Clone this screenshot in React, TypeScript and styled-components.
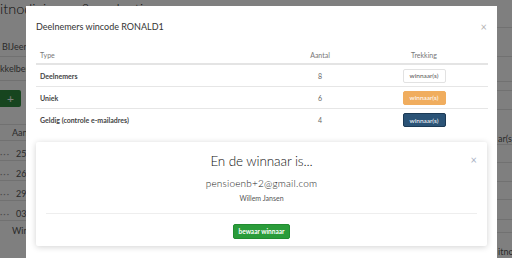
import styled, { createGlobalStyle } from 'styled-components';

const GlobalStyle = createGlobalStyle`
    html, body {
        margin: 0;
        padding: 0;
        overflow: hidden;
        background: #ffffff;
    }
    body {
        font-family: 'Lato', 'Liberation Sans', sans-serif;
        color: #333333;
    }
    * {
        box-sizing: border-box;
    }
`;

const Page = styled.div`
    position: relative;
    width: 512px;
    height: 258px;
    overflow: hidden;
    background: #ffffff;
`;

const BgTitle = styled.div`
    display: flex;
    align-items: baseline;
    gap: 4px;
    height: 36px;
    line-height: 17px;
    white-space: nowrap;
    font-weight: 300;
    font-size: 14.5px;
    color: #222;
`;

const BgSub = styled.span`
    font-size: 10px;
    color: #888;
`;

const BgColumn = styled.div`
    display: flex;
    flex-direction: column;
    width: 90px;
`;

const BgRow = styled.div<{ $h: number; $line?: boolean; $indent?: number; $end?: boolean; $drop?: number }>`
    display: flex;
    align-items: ${p => (p.$end ? 'flex-end' : 'center')};
    gap: 6px;
    height: ${p => p.$h}px;
    padding-left: ${p => p.$indent ?? 0}px;
    padding-top: ${p => p.$drop ?? 0}px;
    border-bottom: 1px solid ${p => (p.$line ? '#e2e2e2' : 'transparent')};
    font-size: 9px;
    color: #555;
    white-space: nowrap;
    overflow: hidden;
`;

const BgDots = styled.span`
    color: #999;
    letter-spacing: 1px;
`;

const BgPlus = styled.div`
    display: flex;
    align-items: center;
    justify-content: center;
    width: 21px;
    height: 17px;
    margin-top: -8px;
    background: #2e8b3e;
    border-radius: 0 2px 2px 0;
    color: #fff;
    font-size: 12px;
`;

const StripWrap = styled.div`
    position: absolute;
    left: 497px;
    top: 0;
    width: 15px;
    display: flex;
    flex-direction: column;
`;

const Backdrop = styled.div`
    position: absolute;
    inset: 0;
    background: rgba(0, 0, 0, 0.5);
`;

const Modal = styled.div`
    position: absolute;
    left: 26px;
    top: 6px;
    width: 471px;
    height: 280px;
    background: #ffffff;
    padding: 0 10px;
`;

const ModalHeader = styled.div`
    display: flex;
    align-items: center;
    justify-content: space-between;
    height: 36px;
    padding-top: 5px;
`;

const ModalTitle = styled.h4`
    margin: 0;
    font-size: 9px;
    font-weight: 400;
    color: #333;
`;

const Close = styled.span<{ $soft?: boolean }>`
    font-size: 11px;
    line-height: 1;
    color: ${p => (p.$soft ? '#a9b3c4' : '#b5b5b5')};
`;

const Table = styled.div`
    margin-top: 5px;
    width: 452px;
`;

const TRow = styled.div<{ $head?: boolean; $last?: boolean }>`
    display: grid;
    grid-template-columns: 244px 80px 128px;
    align-items: center;
    height: ${p => (p.$head ? 18 : 22)}px;
    border-bottom: ${p => (p.$head ? '2px solid #e4e4e4' : p.$last ? 'none' : '1px solid #e6e6e6')};
    font-size: 7px;
`;

const TCell = styled.div<{ $center?: boolean; $head?: boolean; $bold?: boolean }>`
    display: flex;
    justify-content: ${p => (p.$center ? 'center' : 'flex-start')};
    padding-left: ${p => (p.$center ? 0 : 4)}px;
    color: ${p => (p.$head ? '#777' : p.$bold ? '#444' : '#666')};
    font-weight: ${p => (p.$bold ? 700 : 400)};
`;

const DrawButton = styled.button<{ $variant: 'default' | 'warning' | 'primary' }>`
    width: 43px;
    height: 14px;
    padding: 0;
    font-family: 'Lato', sans-serif;
    font-size: 6.5px;
    border-radius: 2px;
    background: ${p => ({ default: '#ffffff', warning: '#f0ad5e', primary: '#2b5376' }[p.$variant])};
    color: ${p => (p.$variant === 'default' ? '#555' : '#ffffff')};
    border: 1px solid ${p => ({ default: '#e2e2e2', warning: '#f0ad5e', primary: '#1c3a55' }[p.$variant])};
`;

const WinnerCard = styled.div`
    margin-top: 11px;
    width: 451px;
    height: 104px;
    padding: 10px 10px 0 10px;
    background: #fff;
    border-radius: 2px;
    box-shadow: 0 1px 6px rgba(0, 0, 0, 0.18);
    display: flex;
    flex-direction: column;
    align-items: center;
`;

const CardHead = styled.div`
    align-self: stretch;
    display: grid;
    grid-template-columns: 1fr auto 1fr;
    align-items: start;
`;

const CardClose = styled.div`
    display: flex;
    justify-content: flex-end;
    padding-top: 2px;
`;

const WinnerTitle = styled.div`
    font-weight: 300;
    font-size: 13.5px;
    line-height: 19px;
    letter-spacing: -0.1px;
    color: #111;
`;

const Email = styled.div`
    font-weight: 300;
    font-size: 10px;
    letter-spacing: 0.2px;
    color: #222;
    margin-top: 6px;
`;

const Name = styled.div`
    font-size: 7px;
    color: #555;
    margin-top: 5px;
`;

const Divider = styled.hr`
    align-self: stretch;
    border: 0;
    border-top: 1px solid #eeeeee;
    margin: 11px 0 10px 0;
`;

const SaveButton = styled.button`
    width: 57px;
    height: 15px;
    padding: 0;
    border: 1px solid #218c30;
    border-radius: 2px;
    background: #2a9c3a;
    color: #fff;
    font-family: 'Lato', sans-serif;
    font-weight: 700;
    font-size: 6.5px;
`;

const rows = [
    { label: 'Deelnemers', count: 8, variant: 'default' as const },
    { label: 'Uniek', count: 6, variant: 'warning' as const },
    { label: 'Geldig (controle e-mailadres)', count: 4, variant: 'primary' as const },
];

const dates = ['25-1', '26-1', '29-1', '03-1'];

const strip = [28, 29, 25, 9, 19, 35, 18, 19, 18, 20, 13, 25];

function RightStrip() {
    return (
        <StripWrap>
            {strip.map((h, i) => (
                <BgRow key={i} $h={h} $line={i < strip.length - 1} $end={i === 5 || i === 11} $indent={1}>
                    {i === 5 ? 'ar(s)' : i === 11 ? 'itnod' : ''}
                </BgRow>
            ))}
        </StripWrap>
    );
}

const App = () => {
    return (
        <Page>
            <GlobalStyle />
            <BgTitle>
                <span>itnodigingen &amp; evaluaties</span>
                <BgSub>update_beoordeeling 1</BgSub>
            </BgTitle>
            <BgColumn>
                <BgRow $h={21} $line $indent={2}>BIJeenkomst</BgRow>
                <BgRow $h={24} $line>kkelberg</BgRow>
                <BgRow $h={44} $line>
                    <BgPlus>+</BgPlus>
                </BgRow>
                <BgRow $h={16} $line $indent={12}>Aanmelding</BgRow>
                {dates.map(d => (
                    <BgRow key={d} $h={20} $drop={5} $line>
                        <BgDots>···</BgDots>
                        {d}2-2019
                    </BgRow>
                ))}
                <BgRow $h={20} $indent={12}>Wincode</BgRow>
            </BgColumn>
            <RightStrip />
            <Backdrop />
            <Modal>
                <ModalHeader>
                    <ModalTitle>Deelnemers wincode RONALD1</ModalTitle>
                    <Close>×</Close>
                </ModalHeader>
                <Table>
                    <TRow $head>
                        <TCell $head>Type</TCell>
                        <TCell $head $center>Aantal</TCell>
                        <TCell $head $center>Trekking</TCell>
                    </TRow>
                    {rows.map((r, i) => (
                        <TRow key={r.label} $last={i === rows.length - 1}>
                            <TCell $bold>{r.label}</TCell>
                            <TCell $center>{r.count}</TCell>
                            <TCell $center>
                                <DrawButton $variant={r.variant}>winnaar(s)</DrawButton>
                            </TCell>
                        </TRow>
                    ))}
                </Table>
                <WinnerCard>
                    <CardHead>
                        <span />
                        <WinnerTitle>En de winnaar is...</WinnerTitle>
                        <CardClose>
                            <Close $soft>×</Close>
                        </CardClose>
                    </CardHead>
                    <Email>pensioenb+2@gmail.com</Email>
                    <Name>Willem Jansen</Name>
                    <Divider />
                    <SaveButton>bewaar winnaar</SaveButton>
                </WinnerCard>
            </Modal>
        </Page>
    );
};

export default App;
